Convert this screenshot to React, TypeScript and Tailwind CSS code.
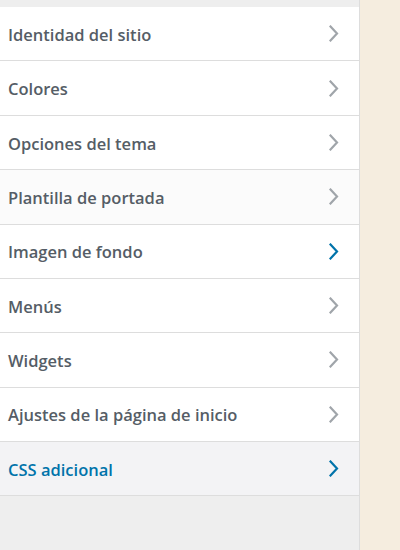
const items = [
  { label: 'Identidad del sitio' },
  { label: 'Colores' },
  { label: 'Opciones del tema' },
  { label: 'Plantilla de portada', bg: 'bg-[#fbfbfb]' },
  { label: 'Imagen de fondo', activeArrow: true },
  { label: 'Menús' },
  { label: 'Widgets' },
  { label: 'Ajustes de la página de inicio' },
  { label: 'CSS adicional', active: true },
];

function Chevron({ color }: { color: string }) {
  return (
    <svg width="10" height="17" viewBox="0 0 10 17" fill="none" className="flex-shrink-0">
      <polyline points="1.5,1.5 8,8.5 1.5,15.5" stroke={color} strokeWidth="2.2" strokeLinecap="square" />
    </svg>
  );
}

export default function App() {
  return (
    <div className="w-[400px] h-[550px] flex bg-[#f5eddf] overflow-hidden" style={{ fontFamily: '"Open Sans", "Noto Sans", sans-serif' }}>
      <div className="w-[360px] h-full flex flex-col bg-[#eeeeee] border-r border-[#dddddd]">
        <div className="h-[7px] flex-shrink-0" />
        {items.map((item) => {
          const bg = item.active ? 'bg-[#f3f3f5]' : item.bg ?? 'bg-white';
          const text = item.active ? 'text-[#0073aa]' : 'text-[#555d66]';
          const arrow = item.active || item.activeArrow ? '#0073aa' : '#a0a5aa';
          return (
            <div
              key={item.label}
              className={`h-[54.375px] flex-shrink-0 flex items-center justify-between pl-2 pr-[20px] border-b border-[#dddddd] ${bg}`}
            >
              <span className={`pt-[3px] text-[16.5px] font-semibold ${text}`}>{item.label}</span>
              <Chevron color={arrow} />
            </div>
          );
        })}
        <div className="flex-1" />
      </div>
      <div className="flex-1" />
    </div>
  );
}
